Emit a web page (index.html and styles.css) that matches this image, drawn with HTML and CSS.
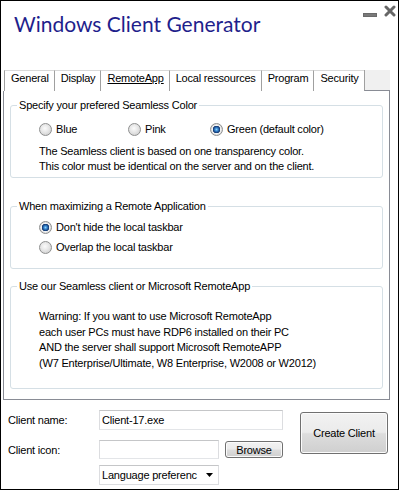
FILE: index.html
```html
<!DOCTYPE html>
<html>
<head>
    <title>Windows Client Generator</title>
    <link rel="stylesheet" href="styles.css">
</head>
<body>
    <div class="window">
        <div class="titlebar">
            <h1 class="title">Windows Client Generator</h1>
            <div class="controls">
                <svg class="btn-min" width="14" height="13" viewBox="0 0 14 13">
                    <rect x="0.5" y="9.5" width="13" height="3" fill="#7a7a7a" stroke="#6a6a6a" stroke-width="1"/>
                </svg>
                <svg class="btn-close" width="12" height="12" viewBox="0 0 12 12">
                    <path d="M2 2 L10 10 M10 2 L2 10" stroke="#666" stroke-width="3" stroke-linecap="round"/>
                </svg>
            </div>
        </div>

        <div class="tabs">
            <div class="tab">General</div>
            <div class="tab">Display</div>
            <div class="tab active"><u>RemoteApp</u></div>
            <div class="tab">Local ressources</div>
            <div class="tab">Program</div>
            <div class="tab">Security</div>
            <div class="tab-fill"></div>
        </div>

        <div class="panel">
            <fieldset class="group group-color">
                <legend>Specify your prefered Seamless Color</legend>
                <div class="color-row">
                    <label class="opt"><input type="radio" name="color" class="radio"> Blue</label>
                    <label class="opt"><input type="radio" name="color" class="radio"> Pink</label>
                    <label class="opt"><input type="radio" name="color" class="radio" checked> Green (default color)</label>
                </div>
                <p class="note">The Seamless client is based on one transparency color.<br>This color must be identical on the server and on the client.</p>
            </fieldset>

            <fieldset class="group group-max">
                <legend>When maximizing a Remote Application</legend>
                <label class="opt"><input type="radio" name="taskbar" class="radio" checked> Don't hide the local taskbar</label>
                <label class="opt opt-second"><input type="radio" name="taskbar" class="radio"> Overlap the local taskbar</label>
            </fieldset>

            <fieldset class="group group-warn">
                <legend>Use our Seamless client or Microsoft RemoteApp</legend>
                <p class="warning">Warning: If you want to use Microsoft RemoteApp<br>each user PCs must have RDP6 installed on their PC<br>AND the server shall support Microsoft RemoteAPP<br>(W7 Enterprise/Ultimate, W8 Enterprise, W2008 or W2012)</p>
            </fieldset>
        </div>

        <div class="bottom">
            <div class="fields">
                <div class="row row-name">
                    <span class="label">Client name:</span>
                    <input type="text" class="textbox name-box" value="Client-17.exe">
                </div>
                <div class="row row-icon">
                    <span class="label">Client icon:</span>
                    <input type="text" class="textbox icon-box">
                    <button class="button browse">Browse</button>
                </div>
                <div class="row row-lang">
                    <div class="combo">
                        <span class="combo-text">Language preferenc</span>
                        <svg class="combo-arrow" width="7" height="4" viewBox="0 0 7 4">
                            <path d="M0 0 L7 0 L3.5 4 Z" fill="#000"/>
                        </svg>
                    </div>
                </div>
            </div>
            <button class="button create">Create Client</button>
        </div>
    </div>
</body>
</html>
```

FILE: styles.css
```css
body {
    margin: 0;
    padding: 0;
    font-family: "Liberation Sans", Arial, sans-serif;
    font-size: 11px;
    letter-spacing: -0.2px;
    color: #000;
    background-color: #fff;
}

.window {
    width: 399px;
    height: 490px;
    box-sizing: border-box;
    border: 1px solid #000;
    background-color: #fff;
    display: flex;
    flex-direction: column;
}

.titlebar {
    height: 69px;
    display: flex;
    justify-content: space-between;
    align-items: flex-start;
}

.title {
    margin: 0;
    padding: 9px 0 0 13px;
    font-family: Lato, sans-serif;
    font-weight: 400;
    font-size: 21px;
    letter-spacing: 0;
    line-height: 28px;
    color: #1f1f8c;
}

.controls {
    display: flex;
    align-items: flex-start;
    gap: 7px;
    padding: 3px 2px 0 0;
}

.btn-close {
    margin-top: 1px;
}

/* tabs */

.tabs {
    display: flex;
    height: 21px;
    margin: 0 8px 0 3px;
}

.tab {
    height: 21px;
    box-sizing: border-box;
    padding: 0 5px 0 6px;
    line-height: 14px;
    border-left: 1px solid #a0a0a0;
    border-top: 1px solid #d9d9d9;
    background-color: #fff;
    white-space: nowrap;
}

.tab-fill {
    flex: 1;
    border-left: 1px solid #a0a0a0;
    border-bottom: 1px solid #898c95;
    background-color: #f0f0f0;
}

.panel {
    height: 309px;
    box-sizing: border-box;
    margin: 0 8px 0 2px;
    padding: 8px 6px 0;
    border: 1px solid #898c95;
    border-top: none;
}

/* group boxes */

.group {
    margin: 0;
    min-width: 0;
    border: 1px solid #d5dfe5;
    border-radius: 3px;
    padding: 0 0 0 6px;
}

.group legend {
    padding: 0 2px;
    line-height: 13px;
}

.group-color {
    padding-top: 9px;
    padding-bottom: 3px;
}

.group-max {
    margin-top: 22px;
    padding-top: 6px;
    padding-bottom: 13px;
}

.group-warn {
    margin-top: 11px;
    padding-top: 16px;
    padding-bottom: 17px;
}

.color-row {
    display: grid;
    grid-template-columns: 89px 82px auto;
    margin-left: 22px;
}

.opt {
    display: flex;
    align-items: center;
    height: 16px;
    line-height: 16px;
    white-space: nowrap;
}

.group-max .opt {
    margin-left: 22px;
}

.opt-second {
    margin-top: 4px;
}

.radio {
    appearance: none;
    -webkit-appearance: none;
    width: 13px;
    height: 13px;
    margin: 0 4px 0 0;
    box-sizing: border-box;
    border: 1px solid #8e8f8f;
    border-radius: 50%;
    background: radial-gradient(circle at 45% 40%, #fbfbfb 0, #e6e6e6 45%, #c6c6c6 100%);
}

.radio:checked {
    background: radial-gradient(circle, #8fd3f8 0, #3a8ad2 1.5px, #1c4f92 2.8px, #10346a 3.5px, #f3f3f3 4px, #dadada 5.5px, #c6c6c6 100%);
}

.note {
    margin: 7px 0 0 22px;
    line-height: 15px;
}

.warning {
    margin: 0 0 0 22px;
    line-height: 15.5px;
}

/* bottom form */

.bottom {
    display: flex;
    align-items: flex-start;
    padding: 10px 0 0 7px;
}

.row {
    display: flex;
    align-items: center;
}

.row-name {
    height: 20px;
    margin-bottom: 10px;
}

.row-icon {
    height: 19px;
    margin-bottom: 6px;
}

.row-lang {
    height: 20px;
    padding-left: 91px;
}

.label {
    width: 91px;
    line-height: 16px;
}

.textbox {
    box-sizing: border-box;
    height: 20px;
    margin: 0;
    padding: 0 2px;
    border: 1px solid;
    border-color: #c5c6c8 #dcdde0 #e3e5e8 #dcdde0;
    font-family: "Liberation Sans", Arial, sans-serif;
    font-size: 11px;
    letter-spacing: -0.2px;
    color: #000;
    outline: none;
}

.name-box {
    width: 184px;
}

.icon-box {
    width: 120px;
    height: 19px;
}

.button {
    box-sizing: border-box;
    margin: 0;
    padding: 0;
    border: 1px solid #707070;
    border-radius: 3px;
    background: linear-gradient(#f2f2f2 0%, #ebebeb 48%, #dddddd 52%, #cfcfcf 100%);
    box-shadow: inset 0 0 0 1px #fbfbfb;
    font-family: "Liberation Sans", Arial, sans-serif;
    font-size: 11px;
    letter-spacing: -0.2px;
    color: #000;
}

.browse {
    width: 58px;
    height: 17px;
    margin-left: 6px;
    line-height: 14px;
}

.create {
    width: 88px;
    height: 42px;
    margin: 2px 0 0 17px;
}

.combo {
    box-sizing: border-box;
    width: 120px;
    height: 20px;
    display: flex;
    align-items: center;
    padding-left: 2px;
    border: 1px solid #dcdde0;
    border-top-color: #c5c6c8;
    background-color: #fff;
}

.combo-text {
    width: 98px;
    white-space: nowrap;
}

.combo-arrow {
    margin-left: 6px;
}
```
